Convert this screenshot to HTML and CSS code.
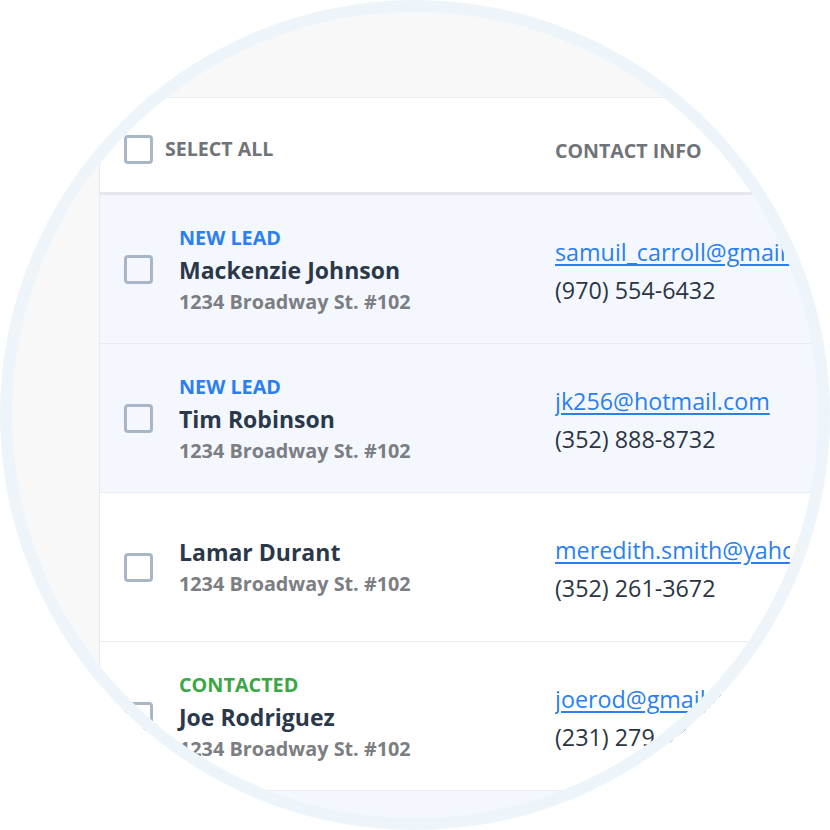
FILE: index.html
```html
<!DOCTYPE html>
<html>
<head>
<meta charset="utf-8">
<link rel="stylesheet" href="styles.css">
</head>
<body>
<div class="lens">
  <div class="card">
    <div class="row head">
      <label class="select-all"><span class="box"></span><span class="htext">SELECT ALL</span></label>
      <div class="col-contact"><span class="htext">CONTACT INFO</span></div>
    </div>
    <div class="row lead">
      <span class="box"></span>
      <div class="col-main">
        <div class="tag new">NEW LEAD</div>
        <div class="name">Mackenzie Johnson</div>
        <div class="addr">1234 Broadway St. #102</div>
      </div>
      <div class="col-contact">
        <a class="email" href="#">samuil_carroll@gmail.com</a>
        <div class="phone">(970) 554-6432</div>
      </div>
    </div>
    <div class="row lead">
      <span class="box"></span>
      <div class="col-main">
        <div class="tag new">NEW LEAD</div>
        <div class="name">Tim Robinson</div>
        <div class="addr">1234 Broadway St. #102</div>
      </div>
      <div class="col-contact">
        <a class="email" href="#">jk256@hotmail.com</a>
        <div class="phone">(352) 888-8732</div>
      </div>
    </div>
    <div class="row">
      <span class="box"></span>
      <div class="col-main">
        <div class="name">Lamar Durant</div>
        <div class="addr">1234 Broadway St. #102</div>
      </div>
      <div class="col-contact">
        <a class="email" href="#">meredith.smith@yahoo.com</a>
        <div class="phone">(352) 261-3672</div>
      </div>
    </div>
    <div class="row">
      <span class="box"></span>
      <div class="col-main">
        <div class="tag done">CONTACTED</div>
        <div class="name">Joe Rodriguez</div>
        <div class="addr">1234 Broadway St. #102</div>
      </div>
      <div class="col-contact">
        <a class="email" href="#">joerod@gmail.com</a>
        <div class="phone">(231) 279-4410</div>
      </div>
    </div>
    <div class="row lead"></div>
  </div>
</div>
</body>
</html>
```
FILE: styles.css
```css
html, body {
  margin: 0;
  padding: 0;
  background: #ffffff;
}
body {
  font-family: "Open Sans", "Noto Sans", sans-serif;
}
.lens {
  position: relative;
  width: 830px;
  height: 830px;
  border-radius: 50%;
  overflow: hidden;
  background: #f8f8f8;
  padding-top: 97px;
  box-sizing: border-box;
}
.lens::after {
  content: "";
  position: absolute;
  inset: 0;
  border: 12px solid #edf5fb;
  border-radius: 50%;
  pointer-events: none;
}
.card {
  margin-left: 99px;
  width: 800px;
  background: #ffffff;
  border-left: 1px solid #e8eaee;
  border-top: 1px solid #eceef1;
}
.row {
  display: grid;
  grid-template-columns: 29px 350px 235px;
  column-gap: 26px;
  align-items: center;
  padding-left: 24px;
  height: 148px;
  border-bottom: 1px solid #eaecf0;
  box-sizing: content-box;
}
.row.lead {
  background: #f4f8fe;
}
.row.head {
  grid-template-columns: 405px 235px;
  column-gap: 26px;
  height: 94px;
  border-bottom: 3px solid #e4e7ed;
}
.row.head > * {
  margin-top: 8px;
}
.select-all {
  display: flex;
  align-items: center;
  gap: 12px;
}
.box {
  display: block;
  width: 29px;
  height: 29px;
  box-sizing: border-box;
  border: 3px solid #a9b6c6;
  border-radius: 4px;
  flex: none;
}
.htext {
  font-size: 19.6px;
  font-weight: 700;
  color: #707478;
  line-height: 28px;
}
.col-main {
  display: flex;
  flex-direction: column;
  padding-top: 2px;
}
.tag {
  font-size: 19.8px;
  font-weight: 700;
  line-height: 32px;
}
.tag.new { color: #2b7ff0; }
.tag.done { color: #3ba646; }
.name {
  font-size: 23px;
  font-weight: 700;
  color: #2b3849;
  line-height: 32px;
}
.addr {
  font-size: 19.8px;
  font-weight: 700;
  color: #7b7e82;
  line-height: 32px;
}
.col-contact {
  display: flex;
  flex-direction: column;
  overflow: hidden;
  white-space: nowrap;
  padding-top: 4px;
}
.email {
  font-size: 23.3px;
  line-height: 38px;
  color: #2b7ff0;
  text-decoration: underline;
  text-underline-offset: 3px;
  text-decoration-thickness: 1.5px;
}
.phone {
  font-size: 23.3px;
  line-height: 38px;
  color: #2b3543;
}
```
